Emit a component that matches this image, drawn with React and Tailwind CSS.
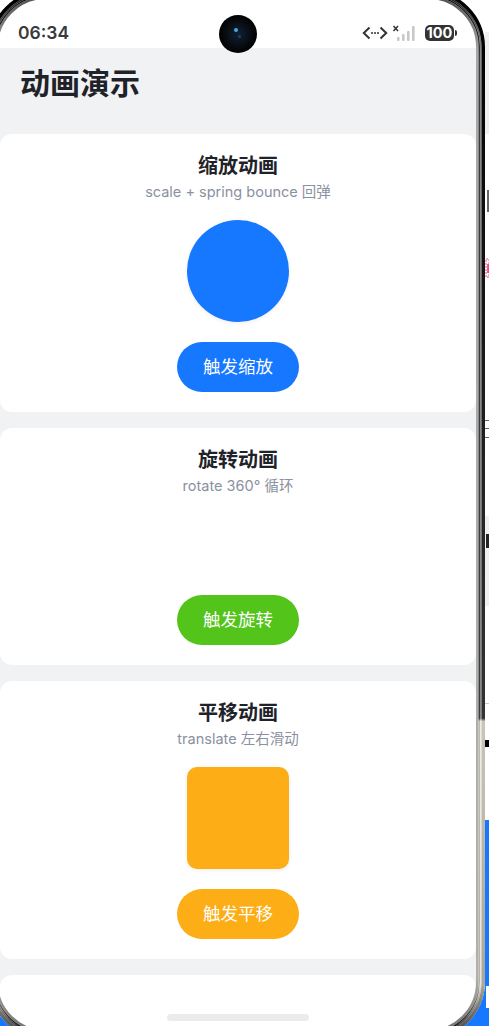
const font = { fontFamily: '"Inter", "Noto Sans CJK SC", sans-serif' };

function rrect(grow, rBase = 48) {
  const l = -2 - grow, t = -1 - grow, rr = 476 + grow, b = 1030 + grow, r = rBase + grow;
  return `M${l + r} ${t}H${rr - r}A${r} ${r} 0 0 1 ${rr} ${t + r}V${b - r}A${r} ${r} 0 0 1 ${rr - r} ${b}H${l + r}A${r} ${r} 0 0 1 ${l} ${b - r}V${t + r}A${r} ${r} 0 0 1 ${l + r} ${t}Z`;
}

function DeviceFrame() {
  return (
    <svg className="absolute left-0 top-0" width="489" height="1026" viewBox="0 0 489 1026" fill="none">
      <defs>
        <linearGradient id="outside" gradientUnits="userSpaceOnUse" x1="0" y1="0" x2="0" y2="1026">
          <stop offset="0.799" stopColor="#ffffff" />
          <stop offset="0.799" stopColor="#1677ff" />
        </linearGradient>
        <linearGradient id="a" gradientUnits="userSpaceOnUse" x1="0" y1="0" x2="0" y2="1026">
          <stop offset="0" stopColor="#555" />
          <stop offset="0.05" stopColor="#a8a8a8" />
          <stop offset="0.95" stopColor="#b0b0ac" />
          <stop offset="1" stopColor="#777" />
        </linearGradient>
        <linearGradient id="b" gradientUnits="userSpaceOnUse" x1="0" y1="0" x2="0" y2="1026">
          <stop offset="0" stopColor="#111" />
          <stop offset="0.06" stopColor="#3d3d3d" />
          <stop offset="0.7" stopColor="#3d3d3d" />
          <stop offset="0.703" stopColor="#bdb9ac" />
          <stop offset="0.96" stopColor="#b5b1a5" />
          <stop offset="1" stopColor="#111" />
        </linearGradient>
        <linearGradient id="c" gradientUnits="userSpaceOnUse" x1="0" y1="0" x2="0" y2="1026">
          <stop offset="0" stopColor="#222" />
          <stop offset="0.05" stopColor="#888" />
          <stop offset="0.7" stopColor="#888" />
          <stop offset="0.703" stopColor="#efece4" />
          <stop offset="0.96" stopColor="#e6e3da" />
          <stop offset="1" stopColor="#333" />
        </linearGradient>
        <linearGradient id="d" gradientUnits="userSpaceOnUse" x1="0" y1="0" x2="0" y2="1026">
          <stop offset="0" stopColor="#000" />
          <stop offset="0.7" stopColor="#333" />
          <stop offset="0.703" stopColor="#c9c5b8" />
          <stop offset="0.96" stopColor="#a9a598" />
          <stop offset="1" stopColor="#555" />
        </linearGradient>
      </defs>

      <path fillRule="evenodd" fill="url(#outside)" d={`M-20 -20H509V1046H-20Z ${rrect(9)}`} />

      <rect x="485" y="32" width="4" height="102" fill="#f0f0f0" />
      <rect x="487" y="190" width="2" height="22" fill="#666" />
      <rect x="486" y="259" width="3" height="18" fill="none" stroke="#e0245e" strokeWidth="0.8" strokeDasharray="2 1" />
      <rect x="487" y="264" width="2" height="9" fill="#e0245e" opacity="0.7" />
      <rect x="485" y="420" width="4" height="1" fill="#666" />
      <rect x="485" y="428" width="4" height="1" fill="#666" />
      <rect x="485" y="437" width="4" height="1" fill="#666" />
      <rect x="485" y="516" width="4" height="90" fill="#f0f0f0" />
      <rect x="486" y="534" width="3" height="14" fill="#222" />
      <rect x="485" y="703" width="4" height="1" fill="#ccc" />
      <rect x="485" y="740" width="4" height="7" fill="#000" />
      <rect x="486" y="986" width="3" height="22" fill="#ffffff" />

      <path d={rrect(1.25)} stroke="url(#a)" strokeWidth="2.5" />
      <path d={rrect(3.25)} stroke="url(#b)" strokeWidth="1.5" />
      <path d={rrect(4.75)} stroke="url(#c)" strokeWidth="1.5" />
      <path d={rrect(7.25)} stroke="url(#d)" strokeWidth="3.5" />
    </svg>
  );
}

function StatusBar() {
  return (
    <div className="h-12 bg-white flex items-center justify-between pl-[18px] pr-[19px] pt-[18px] shrink-0">
      <span className="text-[17.5px] leading-[30px] font-semibold text-[#3a3a3c]" style={font}>06:34</span>
      <div className="flex items-center">
        <svg width="26" height="16" viewBox="0 0 26 16" fill="none" stroke="#333" strokeWidth="2">
          <path d="M7.5 2.5 1.8 8l5.7 5.5M18.5 2.5 24.2 8l-5.7 5.5" />
          <circle cx="10" cy="8" r="1" fill="#333" stroke="none" />
          <circle cx="13" cy="8" r="1" fill="#333" stroke="none" />
          <circle cx="16" cy="8" r="1" fill="#333" stroke="none" />
        </svg>
        <svg className="ml-[4px]" width="25" height="22" viewBox="0 0 25 22" fill="none">
          <path d="M1.5 4 6 9M6 4 1.5 9" stroke="#333" strokeWidth="1.5" />
          <rect x="5" y="15" width="2.6" height="4" rx="1" fill="#c8c8c8" />
          <rect x="10" y="12" width="2.6" height="7" rx="1" fill="#c8c8c8" />
          <rect x="15" y="9" width="2.6" height="10" rx="1" fill="#c8c8c8" />
          <rect x="20" y="4" width="2.6" height="15" rx="1" fill="#c8c8c8" />
        </svg>
        <div className="ml-[8px] w-[29px] h-[16px] rounded-[5px] bg-[#333] flex items-center justify-center text-white text-[14.5px] font-bold leading-none" style={font}>100</div>
        <div className="ml-[1px] w-[2px] h-[6px] rounded-r-sm bg-[#333]" />
      </div>
    </div>
  );
}

function Card({ title, sub, button, color, children }) {
  return (
    <div className="bg-white rounded-xl pt-5 pb-5 flex flex-col items-center" style={font}>
      <h2 className="text-[20px] leading-6 font-bold text-[#1f2329]">{title}</h2>
      <p className="text-[14.5px] leading-5 mt-1 text-[#8a919f]">{sub}</p>
      {children}
      <button className={`w-[122px] h-[50px] rounded-[25px] text-white text-[17.5px] ${color}`}>{button}</button>
    </div>
  );
}

export default function App() {
  return (
    <div className="relative w-[489px] h-[1026px] overflow-hidden bg-white">
      <div className="w-[476px] h-[1026px] bg-[#f1f2f4] flex flex-col overflow-hidden">
        <StatusBar />
        <h1 className="pl-5 pt-[14px] h-[86px] text-[30px] leading-[42px] font-bold text-[#1f2329] shrink-0" style={font}>动画演示</h1>
        <div className="flex flex-col gap-4">
          <Card title="缩放动画" sub="scale + spring bounce 回弹" button="触发缩放" color="bg-[#1677ff]">
            <div className="w-[102px] h-[102px] mt-[18px] mb-5 rounded-full bg-[#1677ff] shadow-[0_1px_4px_rgba(0,0,0,0.08)]" />
          </Card>
          <Card title="旋转动画" sub="rotate 360° 循环" button="触发旋转" color="bg-[#52c41a]">
            <div className="h-[61px] mt-[18px] mb-5" />
          </Card>
          <Card title="平移动画" sub="translate 左右滑动" button="触发平移" color="bg-[#fdad15]">
            <div className="w-[102px] h-[102px] mt-[18px] mb-5 rounded-[10px] bg-[#fdad15] shadow-[0_1px_4px_rgba(0,0,0,0.08)]" />
          </Card>
          <div className="h-[80px] bg-white rounded-xl shrink-0" />
        </div>
      </div>

      <div className="absolute left-[219px] top-[15px] w-[38px] h-[38px] rounded-full bg-[radial-gradient(circle_at_50%_50%,#0d2236_0%,#0a0f16_40%,#000_72%)]">
        <div className="absolute left-[15px] top-[13px] w-[4px] h-[4px] rounded-full bg-[#4aa3e0]" />
        <div className="absolute left-[19px] top-[20px] w-[3px] h-[3px] rounded-full bg-[#17456e]" />
      </div>

      <div className="absolute left-[167px] top-[1014px] w-[142px] h-[7px] rounded-full bg-[#ebebeb]" />

      <DeviceFrame />
    </div>
  );
}
